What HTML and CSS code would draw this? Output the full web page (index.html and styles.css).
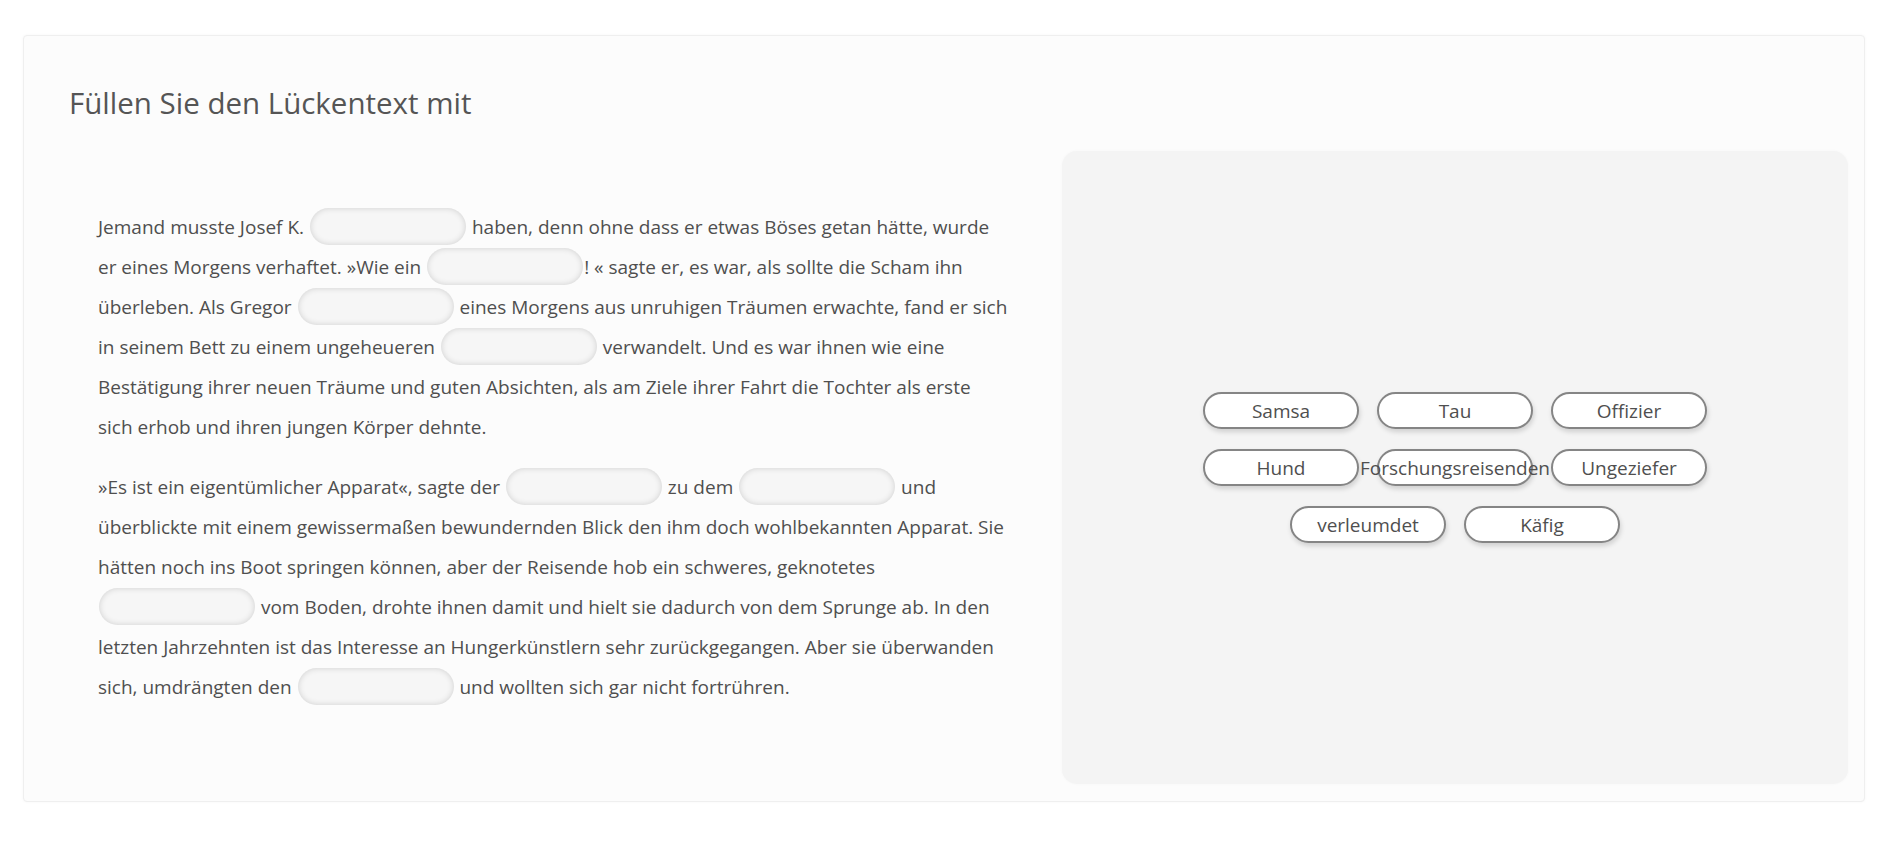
FILE: index.html
```html
<!DOCTYPE html>
<html lang="de">
<head>
<meta charset="utf-8">
<title>Lückentext</title>
<link rel="stylesheet" href="styles.css">
</head>
<body>
<div class="card">
  <h1 class="title">Füllen Sie den Lückentext mit</h1>
  <div class="row">
    <div class="text-col">
      <p class="para">Jemand musste Josef K. <span class="blank"></span> haben, denn ohne dass er etwas Böses getan hätte, wurde er eines Morgens verhaftet. »Wie ein <span class="blank"></span>! « sagte er, es war, als sollte die Scham ihn überleben. Als Gregor <span class="blank"></span> eines Morgens aus unruhigen Träumen erwachte, fand er sich in seinem Bett zu einem ungeheueren <span class="blank"></span> verwandelt. Und es war ihnen wie eine Bestätigung ihrer neuen Träume und guten Absichten, als am Ziele ihrer Fahrt die Tochter als erste sich&nbsp;erhob und ihren jungen Körper dehnte.</p>
      <p class="para">»Es ist ein eigentümlicher Apparat«, sagte der <span class="blank"></span> zu dem <span class="blank"></span> und überblickte mit einem gewissermaßen bewundernden Blick den ihm doch wohlbekannten Apparat. Sie hätten noch ins Boot springen können, aber der Reisende hob ein schweres, geknotetes <span class="blank"></span> vom Boden, drohte ihnen damit und hielt sie dadurch von dem Sprunge ab. In den letzten Jahrzehnten ist das Interesse an Hungerkünstlern sehr zurückgegangen. Aber sie überwanden sich, umdrängten den <span class="blank"></span> und wollten sich gar nicht fortrühren.</p>
    </div>
    <div class="panel">
      <div class="chips">
        <div class="chip">Samsa</div>
        <div class="chip">Tau</div>
        <div class="chip">Offizier</div>
        <div class="chip">Hund</div>
        <div class="chip">Forschungsreisenden</div>
        <div class="chip">Ungeziefer</div>
        <div class="chip">verleumdet</div>
        <div class="chip">Käfig</div>
      </div>
    </div>
  </div>
</div>
</body>
</html>
```

FILE: styles.css
```css
html, body {
  margin: 0;
  background: #ffffff;
}

body {
  padding: 35px 26px 40px 23px;
  font-family: "Open Sans", "Noto Sans", "Liberation Sans", sans-serif;
  color: #4f4f4f;
}

.card {
  background: #fcfcfc;
  border: 1px solid #efefef;
  border-radius: 4px;
  box-shadow: 0 0 3px rgba(0, 0, 0, 0.04);
  padding: 0 16px 17px 45px;
}

.title {
  margin: 0;
  padding-top: 47px;
  font-size: 29.5px;
  line-height: 40px;
  font-weight: 400;
  color: #555555;
}

.row {
  display: flex;
  margin-top: 28px;
}

.text-col {
  flex: 1;
  padding: 56px 50px 0 29px;
}

.para {
  margin: 0 0 20px 0;
  font-size: 19px;
  line-height: 40px;
}

.blank {
  display: inline-block;
  width: 156px;
  height: 37px;
  margin: 0 1px;
  border-radius: 19px;
  background: #f6f6f6;
  box-shadow: inset 0 0 6px rgba(0, 0, 0, 0.16);
  vertical-align: -11px;
}

.panel {
  width: 786px;
  height: 633px;
  flex: none;
  background: #f4f4f4;
  border-radius: 15px;
  box-shadow: 0 0 3px rgba(0, 0, 0, 0.03);
  display: flex;
  align-items: center;
  justify-content: center;
}

.chips {
  width: 530px;
  display: flex;
  flex-wrap: wrap;
  justify-content: center;
  gap: 20px 18px;
}

.chip {
  width: 156px;
  height: 37px;
  box-sizing: border-box;
  border: 2px solid #858585;
  border-radius: 19px;
  background: #ffffff;
  box-shadow: 1px 3px 5px rgba(0, 0, 0, 0.15);
  display: flex;
  align-items: center;
  justify-content: center;
  white-space: nowrap;
  font-size: 19px;
  color: #4f4f4f;
}
```
